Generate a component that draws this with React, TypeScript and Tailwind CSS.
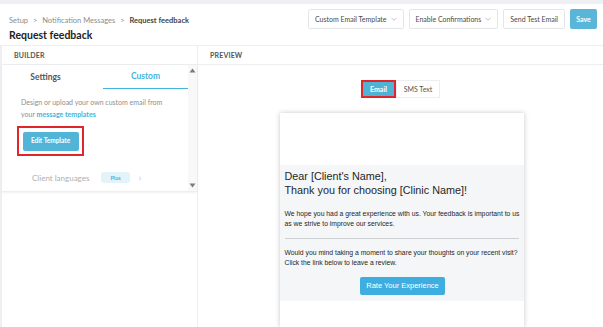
import React from "react";

const ui = { fontFamily: "Lato, 'Open Sans', sans-serif" };
const mail = { fontFamily: "'Liberation Sans', Arial, sans-serif" };

const Chevron = () => (
  <svg width="6" height="4" viewBox="0 0 6 4" className="ml-[4px]">
    <path d="M0.5 0.8 L3 3.3 L5.5 0.8" fill="none" stroke="#a8a8a8" strokeWidth="0.7" />
  </svg>
);

const HeaderButton = ({ label, chevron }: { label: string; chevron?: boolean }) => (
  <button className="flex items-center h-[20px] px-[6px] border border-[#e4e6ea] rounded-[2px] bg-white text-[7px] text-[#4a4a4a]">
    {label}
    {chevron && <Chevron />}
  </button>
);

const App = () => {
  return (
    <div className="w-[603px] h-[327px] overflow-hidden bg-white" style={ui}>
      <div className="h-[4px] bg-[#eef0f3]" />
      <header className="flex justify-between h-[42px] border-b border-[#eceef1]">
        <div className="pl-[9px] pt-[12px]">
          <p className="text-[7.5px] text-[#8c8c8c] leading-[10px]">
            Setup <span className="mx-[3px]">&gt;</span> Notification Messages{" "}
            <span className="mx-[3px]">&gt;</span>{" "}
            <span className="text-[#444] font-bold">Request feedback</span>
          </p>
          <h1 className="mt-[2px] text-[10.5px] font-bold text-[#222] leading-[14px]">
            Request feedback
          </h1>
        </div>
        <div className="flex items-start gap-[5px] pt-[5px] pr-[6px]">
          <HeaderButton label="Custom Email Template" chevron />
          <HeaderButton label="Enable Confirmations" chevron />
          <HeaderButton label="Send Test Email" />
          <button className="h-[20px] w-[27px] rounded-[2px] bg-[#5ab6d9] text-white text-[7px] font-bold">
            Save
          </button>
        </div>
      </header>
      <div className="flex h-[281px]">
        <aside className="w-[198px] flex flex-col border-l-2 border-[#eeeef3] border-r border-r-[#eceef1]">
          <div className="h-[19px] border-b border-[#eceef1] flex items-center pl-[12px] text-[7px] font-bold tracking-wide text-[#555]">
            BUILDER
          </div>
          <div className="flex h-[127px] shadow-[0_1px_2px_rgba(0,0,0,0.06)] border-b border-[#eceef1]">
            <div className="flex-1 flex flex-col">
              <div className="flex h-[24px]">
                <div className="w-[101px] pr-[14px] flex items-center justify-center text-[8.5px] font-bold text-[#555]">
                  Settings
                </div>
                <div className="flex-1 flex items-center justify-center text-[8.5px] font-bold text-[#45b4dc] border-b-[1.5px] border-[#45b4dc]">
                  Custom
                </div>
              </div>
              <div className="pl-[19px] pt-[7px] text-[7px] leading-[12px] text-[#8e8e8e]">
                <p>Design or upload your own custom email from</p>
                <p>
                  your <span className="text-[#45b4dc] font-bold">message templates</span>
                </p>
              </div>
              <div className="ml-[15px] mt-[6px] w-[67px] h-[30px] border-2 border-[#e0262b] flex items-center justify-center">
                <button className="w-[56px] h-[19px] rounded-[2px] bg-[#52b5d8] text-white text-[6.5px] font-bold">
                  Edit Template
                </button>
              </div>
              <div className="flex items-center pl-[30px] mt-[15px] text-[8px] text-[#b0b0b0]">
                Client languages
                <span className="ml-[12px] px-[9px] h-[11px] rounded-[3px] bg-[#e4f2fa] text-[#45b4dc] text-[5.5px] font-bold flex items-center">
                  Plus
                </span>
                <span className="ml-[9px] text-[9px] text-[#c0c0c0]">›</span>
              </div>
            </div>
            <div className="w-[9px] bg-[#f8f8f8] flex flex-col justify-between items-center py-[3px] text-[#777]">
              <svg width="7" height="5" viewBox="0 0 7 5">
                <path d="M0.5 4.5 L3.5 0.5 L6.5 4.5 Z" fill="#7a7a7a" />
              </svg>
              <svg width="7" height="5" viewBox="0 0 7 5">
                <path d="M0.5 0.5 L3.5 4.5 L6.5 0.5 Z" fill="#7a7a7a" />
              </svg>
            </div>
          </div>
        </aside>
        <main className="flex-1 flex flex-col">
          <div className="h-[19px] border-b border-[#eceef1] flex items-center pl-[12px] text-[7px] font-bold tracking-wide text-[#555]">
            PREVIEW
          </div>
          <div className="flex justify-center pt-[15px]">
            <div className="flex items-center">
              <div className="border-2 border-[#e0262b] w-[35px] h-[18px] flex">
                <button className="flex-1 bg-[#4fb3d6] text-white text-[7px] font-bold">Email</button>
              </div>
              <div className="h-[18px] w-[44px] border border-[#eceef1] flex items-center justify-center text-[7px] text-[#555]">
                SMS Text
              </div>
            </div>
          </div>
          <div className="mx-auto mt-[15px] w-[244px] flex-1 bg-white shadow-[0_0_5px_rgba(0,0,0,0.22)] translate-x-[1px]" style={mail}>
            <div className="h-[52px]" />
            <div className="bg-[#f5f6f8] pl-[5px] pr-[3px] pt-[4px] pb-[6px] text-[#262626]">
              <p className="text-[10.8px] leading-[14px]">Dear [Client's Name],</p>
              <p className="text-[10.8px] leading-[14px]">Thank you for choosing [Clinic Name]!</p>
              <p className="mt-[12px] text-[6.8px] leading-[10px]">
                We hope you had a great experience with us. Your feedback is important to us as we strive to improve our services.
              </p>
              <div className="mt-[9px] mr-[2px] h-px bg-[#cfd1d4]" />
              <p className="mt-[9px] text-[6.8px] leading-[10px]">
                Would you mind taking a moment to share your thoughts on your recent visit? Click the link below to leave a review.
              </p>
              <div className="flex justify-center mt-[9px]">
                <button className="w-[85px] h-[18px] rounded-[2px] bg-[#3eaee0] text-white text-[7.5px]">
                  Rate Your Experience
                </button>
              </div>
            </div>
          </div>
        </main>
      </div>
    </div>
  );
};

export default App;
